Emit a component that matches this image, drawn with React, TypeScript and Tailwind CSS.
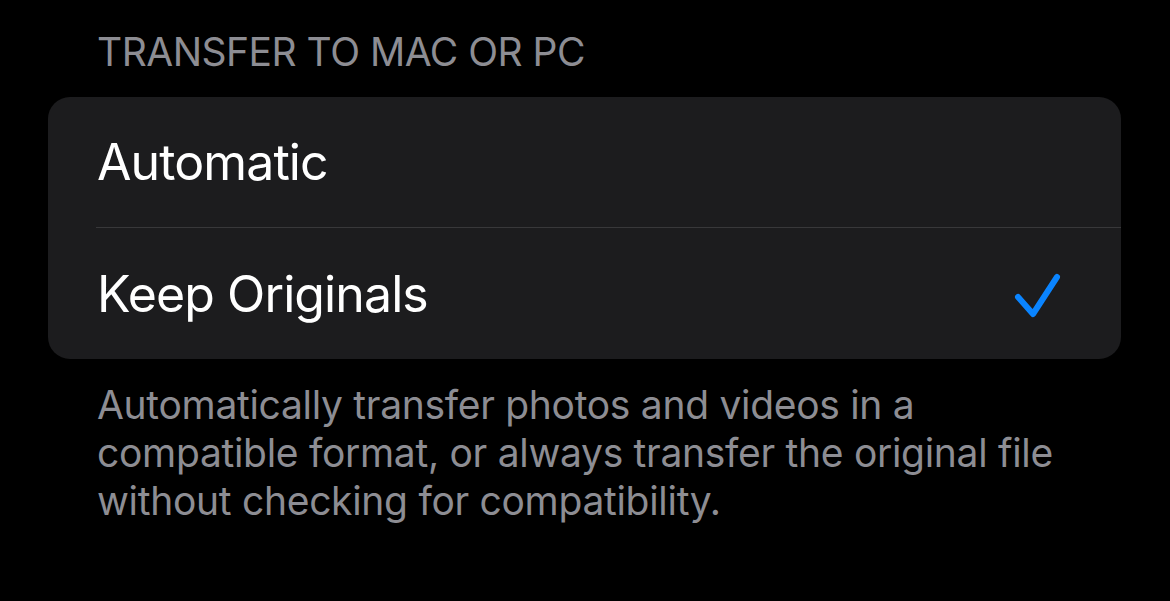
export default function App() {
  return (
    <div className="min-h-[601px] w-[1170px] bg-black pt-[28px]" style={{ fontFamily: 'Inter, "Noto Sans", sans-serif' }}>
      <div className="pl-[97px] text-[39px] leading-[47px] tracking-[-0.5px] text-[#8d8d93]">TRANSFER TO MAC OR PC</div>
      <div className="mt-[22px] ml-[48px] w-[1073px] overflow-hidden rounded-[22px] bg-[#1c1c1e]">
        <div className="flex h-[130px] items-center pl-[49px] text-[50px] leading-[60px] tracking-[-0.9px] text-white">Automatic</div>
        <div className="ml-[48px] h-px bg-[#38383a]" />
        <div className="flex h-[131px] items-center justify-between pl-[49px] pr-[60px] text-[50px] leading-[60px] tracking-[-0.9px] text-white">
          <span>Keep Originals</span>
          <svg width="48" height="48" viewBox="0 0 48 48" fill="none" className="mt-[3px]">
            <path d="M5 26 L20 43 L44 6" stroke="#0a84ff" strokeWidth="6" strokeLinecap="round" strokeLinejoin="round" />
          </svg>
        </div>
      </div>
      <div className="mt-[22px] w-[1100px] pl-[97px] text-[39px] leading-[48px] tracking-[-0.3px] text-[#8d8d93]">
        Automatically transfer photos and videos in a<br />
        compatible format, or always transfer the original file<br />
        without checking for compatibility.
      </div>
    </div>
  );
}
